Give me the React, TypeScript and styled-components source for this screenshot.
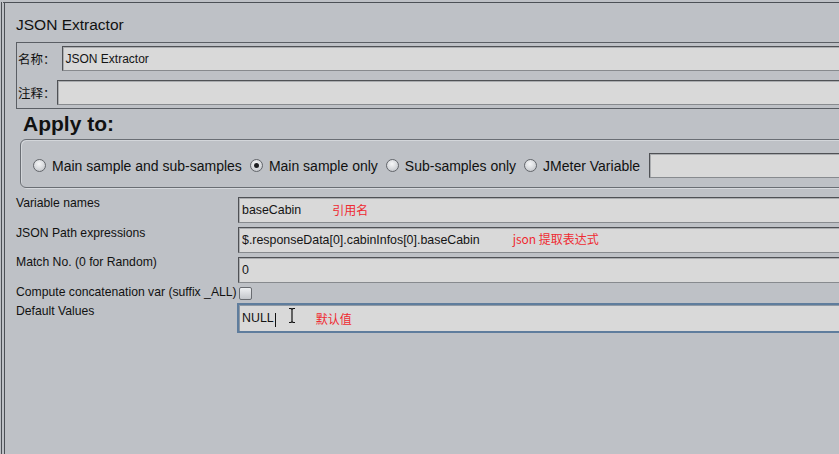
import React from 'react';
import styled, { createGlobalStyle, css } from 'styled-components';

const GlobalStyle = createGlobalStyle`
  html, body {
    margin: 0;
    padding: 0;
    background: #bec1c6;
  }

  body {
    font-family: "Liberation Sans", Arial, "Noto Sans CJK SC", sans-serif;
    color: #141414;
  }
`;

const fieldBase = css`
  background: #d9d9d9;
  border: 1px solid;
  border-color: #4f5155 #878a8e #878a8e #4f5155;
  box-shadow: inset 1px 1px 0 #aaacaf;
  box-sizing: border-box;
  display: flex;
  align-items: center;
  padding-left: 3px;
  white-space: nowrap;
`;

/**
 * JSON Extractor settings panel
 */
const App: React.FC = () => {
  return (
    <>
      <GlobalStyle />
      <Page>
        <Frame>
          <Content>
            <Title>JSON Extractor</Title>

            <NamePanel>
              <NameRow $gap={6}>
                <NameLabel>名称：</NameLabel>
                <NameField>JSON Extractor</NameField>
              </NameRow>
              <NameRow $gap={1}>
                <NameLabel>注释：</NameLabel>
                <NameField />
              </NameRow>
            </NamePanel>

            <ApplyTitle>Apply to:</ApplyTitle>
            <GroupBox>
              <RadioOption>
                <Radio />
                Main sample and sub-samples
              </RadioOption>
              <RadioOption>
                <Radio $checked />
                Main sample only
              </RadioOption>
              <RadioOption>
                <Radio />
                Sub-samples only
              </RadioOption>
              <RadioOption>
                <Radio />
                JMeter Variable
              </RadioOption>
              <VariableField />
            </GroupBox>

            <Form>
              <FormRow $height={26}>
                <FieldLabel $shift={-1}>Variable names</FieldLabel>
                <FormField>
                  baseCabin
                  <Note $gap={31} $lift={2}>引用名</Note>
                </FormField>
              </FormRow>
              <FormRow $height={26}>
                <FieldLabel $shift={-1}>JSON Path expressions</FieldLabel>
                <FormField>
                  $.responseData[0].cabinInfos[0].baseCabin
                  <Note $gap={33} $lift={3}>json 提取表达式</Note>
                </FormField>
              </FormRow>
              <FormRow $height={26}>
                <FieldLabel $shift={-2}>Match No. (0 for Random)</FieldLabel>
                <FormField>0</FormField>
              </FormRow>
              <FormRow $height={14}>
                <FieldLabel $shift={-2}>Compute concatenation var (suffix _ALL)</FieldLabel>
                <CheckBox />
              </FormRow>
              <FormRow $height={30} $tight>
                <FieldLabel $shift={1}>Default Values</FieldLabel>
                <FocusField>
                  NULL
                  <Caret />
                  <Note $gap={40} $lift={0}>默认值</Note>
                  <IBeam width="8" height="17" viewBox="0 0 8 17">
                    <path
                      d="M1 1.5h2l1 1 1-1h2M4 2.5v12M1 15.5h2l1-1 1 1h2"
                      fill="none"
                      stroke="#111"
                      strokeWidth="1.2"
                    />
                  </IBeam>
                </FocusField>
              </FormRow>
            </Form>
          </Content>
        </Frame>
      </Page>
    </>
  );
};

const Page = styled.div`
  width: 839px;
  height: 454px;
  overflow: hidden;
  padding-top: 2px;
  box-sizing: border-box;
  background: #bec1c6;
`;

const Frame = styled.div`
  height: 100%;
  margin-left: 1px;
  border-left: 4px double #4c5056;
  border-top: 1px solid #4c5056;
  padding: 12px 0 0 11px;
  box-sizing: border-box;
  overflow: hidden;
`;

const Content = styled.div`
  margin-right: -40px;
`;

const Title = styled.div`
  font-size: 15.5px;
  line-height: 20px;
  height: 20px;
  margin-bottom: 7px;
  color: #111;
`;

const NamePanel = styled.div`
  border: 1px solid #5a5e64;
  padding: 3px 0 3px 1px;
  display: flex;
  flex-direction: column;
  gap: 9px;
`;

const NameRow = styled.div<{ $gap: number }>`
  display: flex;
  align-items: center;
  gap: ${({ $gap }) => $gap}px;
  height: 25px;
`;

const NameLabel = styled.span`
  font-size: 12.5px;
  white-space: nowrap;
  color: #111;
`;

const NameField = styled.div`
  ${fieldBase};
  flex: 1;
  height: 25px;
  font-size: 12px;
`;

const ApplyTitle = styled.div`
  font-size: 21px;
  font-weight: bold;
  line-height: 24px;
  margin: 3px 0 3px 7px;
  color: #111;
`;

const GroupBox = styled.div`
  margin-left: 4px;
  height: 49px;
  box-sizing: border-box;
  border: 1px solid #6a6e74;
  border-radius: 6px;
  box-shadow: inset 1px 1px 0 #d3d6da, 1px 1px 0 #d6d9dd;
  padding: 13px 0 9px 12px;
  display: flex;
  align-items: center;
`;

const RadioOption = styled.label`
  display: flex;
  align-items: center;
  gap: 6px;
  margin-right: 8px;
  font-size: 14px;
  white-space: nowrap;
  color: #111;
`;

const Radio = styled.span<{ $checked?: boolean }>`
  position: relative;
  width: 13px;
  height: 13px;
  flex: none;
  box-sizing: border-box;
  border-radius: 50%;
  border: 1px solid #63666b;
  background: radial-gradient(circle at 45% 35%, #f5f6f7 0%, #dcdee1 45%, #b9bcc1 100%);

  &::after {
    content: '';
    display: ${({ $checked }) => ($checked ? 'block' : 'none')};
    position: absolute;
    left: 3px;
    top: 3px;
    width: 5px;
    height: 5px;
    border-radius: 50%;
    background: #1e1f22;
  }
`;

const VariableField = styled.div`
  ${fieldBase};
  flex: 1;
  height: 25px;
  margin-left: 1px;
`;

const Form = styled.div`
  margin-top: 9px;
  display: flex;
  flex-direction: column;
  gap: 4px;
`;

const FormRow = styled.div<{ $height: number; $tight?: boolean }>`
  display: grid;
  grid-template-columns: 222px 1fr;
  align-items: start;
  height: ${({ $height }) => $height}px;
  margin-top: ${({ $tight }) => ($tight ? '-2px' : '0')};
`;

const FieldLabel = styled.div<{ $shift: number }>`
  font-size: 12.2px;
  line-height: 15px;
  margin-top: ${({ $shift }) => $shift}px;
  white-space: nowrap;
  color: #111;
`;

const FormField = styled.div`
  ${fieldBase};
  height: 26px;
  font-size: 12.4px;
`;

const FocusField = styled.div`
  ${fieldBase};
  position: relative;
  height: 30px;
  margin-left: -1px;
  border: 2px solid #5f7d9d;
  box-shadow: inset 1px 1px 0 #8f99a4;
  font-size: 12.4px;
`;

const Note = styled.span<{ $gap: number; $lift: number }>`
  margin-left: ${({ $gap }) => $gap}px;
  margin-bottom: ${({ $lift }) => $lift}px;
  font-family: "Noto Sans CJK SC", sans-serif;
  font-size: 12px;
  color: #ef2a31;
`;

const Caret = styled.span`
  width: 1px;
  height: 14px;
  margin-left: 1px;
  margin-top: 3px;
  background: #111;
`;

const IBeam = styled.svg`
  position: absolute;
  left: 49px;
  top: 2px;
`;

const CheckBox = styled.span`
  width: 13px;
  height: 13px;
  margin-left: 1px;
  box-sizing: border-box;
  border: 1px solid #696c71;
  border-radius: 2px;
  background: linear-gradient(#eef0f2, #c3c6cb);
`;

export default App;
